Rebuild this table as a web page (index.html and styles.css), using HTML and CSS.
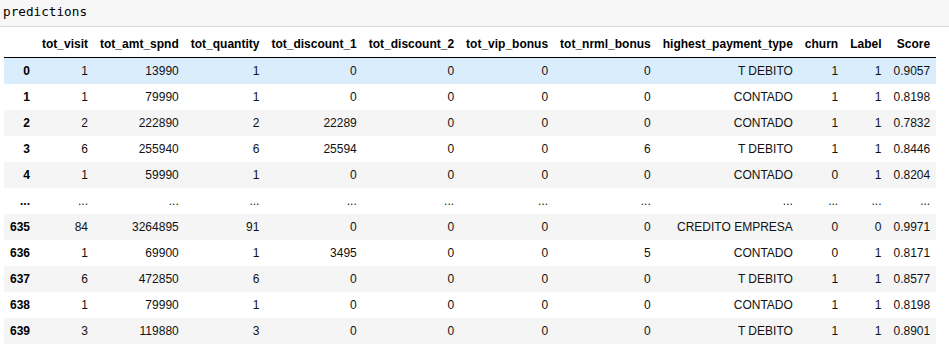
FILE: index.html
```html
<!DOCTYPE html>
<html>
<head>
    <meta charset="UTF-8">
    <title>predictions</title>
    <link rel="stylesheet" href="styles.css">
</head>
<body>
    <div class="input-cell">
        <pre>predictions</pre>
    </div>

    <div class="output">
        <table class="dataframe">
            <thead>
                <tr>
                    <th></th>
                    <th>tot_visit</th>
                    <th>tot_amt_spnd</th>
                    <th>tot_quantity</th>
                    <th>tot_discount_1</th>
                    <th>tot_discount_2</th>
                    <th>tot_vip_bonus</th>
                    <th>tot_nrml_bonus</th>
                    <th>highest_payment_type</th>
                    <th>churn</th>
                    <th>Label</th>
                    <th>Score</th>
                </tr>
            </thead>
            <tbody>
                <tr class="hover">
                    <th>0</th><td>1</td><td>13990</td><td>1</td><td>0</td><td>0</td><td>0</td><td>0</td><td>T DEBITO</td><td>1</td><td>1</td><td>0.9057</td>
                </tr>
                <tr>
                    <th>1</th><td>1</td><td>79990</td><td>1</td><td>0</td><td>0</td><td>0</td><td>0</td><td>CONTADO</td><td>1</td><td>1</td><td>0.8198</td>
                </tr>
                <tr>
                    <th>2</th><td>2</td><td>222890</td><td>2</td><td>22289</td><td>0</td><td>0</td><td>0</td><td>CONTADO</td><td>1</td><td>1</td><td>0.7832</td>
                </tr>
                <tr>
                    <th>3</th><td>6</td><td>255940</td><td>6</td><td>25594</td><td>0</td><td>0</td><td>6</td><td>T DEBITO</td><td>1</td><td>1</td><td>0.8446</td>
                </tr>
                <tr>
                    <th>4</th><td>1</td><td>59990</td><td>1</td><td>0</td><td>0</td><td>0</td><td>0</td><td>CONTADO</td><td>0</td><td>1</td><td>0.8204</td>
                </tr>
                <tr>
                    <th>...</th><td>...</td><td>...</td><td>...</td><td>...</td><td>...</td><td>...</td><td>...</td><td>...</td><td>...</td><td>...</td><td>...</td>
                </tr>
                <tr>
                    <th>635</th><td>84</td><td>3264895</td><td>91</td><td>0</td><td>0</td><td>0</td><td>0</td><td>CREDITO EMPRESA</td><td>0</td><td>0</td><td>0.9971</td>
                </tr>
                <tr>
                    <th>636</th><td>1</td><td>69900</td><td>1</td><td>3495</td><td>0</td><td>0</td><td>5</td><td>CONTADO</td><td>0</td><td>1</td><td>0.8171</td>
                </tr>
                <tr>
                    <th>637</th><td>6</td><td>472850</td><td>6</td><td>0</td><td>0</td><td>0</td><td>0</td><td>T DEBITO</td><td>1</td><td>1</td><td>0.8577</td>
                </tr>
                <tr>
                    <th>638</th><td>1</td><td>79990</td><td>1</td><td>0</td><td>0</td><td>0</td><td>0</td><td>CONTADO</td><td>1</td><td>1</td><td>0.8198</td>
                </tr>
                <tr>
                    <th>639</th><td>3</td><td>119880</td><td>3</td><td>0</td><td>0</td><td>0</td><td>0</td><td>T DEBITO</td><td>1</td><td>1</td><td>0.8901</td>
                </tr>
            </tbody>
        </table>
    </div>
</body>
</html>
```

FILE: styles.css
```css
body {
    margin: 0;
    padding: 0;
    background-color: #fff;
    color: #000;
    font-family: "Liberation Sans", Arial, sans-serif;
}

.input-cell {
    height: 26px;
    background-color: #f7f7f7;
    border-bottom: 1px solid #dcdcdc;
}

.input-cell pre {
    margin: 0;
    padding: 4px 0 0 3px;
    font-family: "DejaVu Sans Mono", monospace;
    font-size: 12.7px;
    line-height: 16px;
    color: #000;
}

.output {
    padding: 4px 0 0 4px;
}

.dataframe {
    border-collapse: collapse;
    border: none;
    font-size: 12px;
    table-layout: auto;
}

.dataframe thead {
    border-bottom: 1px solid #000;
    vertical-align: bottom;
}

.dataframe th,
.dataframe td {
    text-align: right;
    vertical-align: middle;
    padding: 6px;
    line-height: 14px;
    white-space: nowrap;
    border: none;
}

.dataframe th {
    font-weight: bold;
}

.dataframe td {
    color: #111;
}

.dataframe tbody tr:nth-child(odd) {
    background-color: #f5f5f5;
}

.dataframe tbody tr.hover {
    background-color: #d9edfd;
}
```
